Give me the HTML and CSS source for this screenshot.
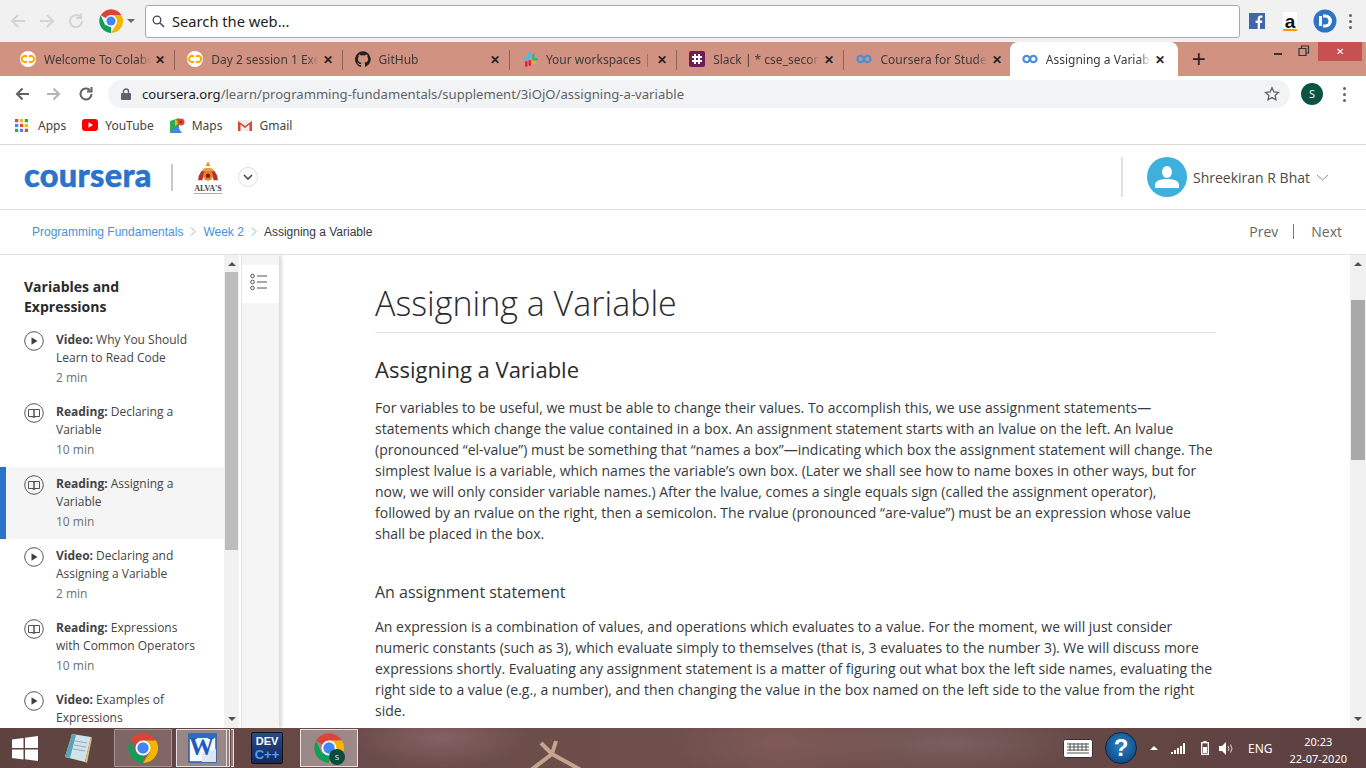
FILE: index.html
```html
<!DOCTYPE html>
<html lang="en">

<head>
  <meta charset="UTF-8">
  <title>Assigning a Variable</title>
  <link rel="stylesheet" href="styles.css">
</head>

<body>
  <!-- Search toolbar -->
  <div class="searchbar">
    <div class="nav-group faded">
      <svg width="18" height="18" viewBox="0 0 18 18"><path d="M16 9H3M9 3L3 9l6 6" fill="none" stroke="#d4d4d4" stroke-width="2"/></svg>
      <svg width="18" height="18" viewBox="0 0 18 18"><path d="M2 9h13M9 3l6 6-6 6" fill="none" stroke="#d4d4d4" stroke-width="2"/></svg>
      <svg width="18" height="18" viewBox="0 0 18 18"><path d="M15 9a6 6 0 1 1-2-4.400M14 1.500V6H9.500" fill="none" stroke="#d4d4d4" stroke-width="2"/></svg>
    </div>
    <svg class="chrome-big" width="24" height="24" viewBox="3 3 42 42"><use href="#chrome"/></svg>
    <span class="caret"></span>
    <div class="search-box">
      <svg width="13" height="13" viewBox="0 0 13 13"><circle cx="5" cy="5" r="3.800" fill="none" stroke="#444" stroke-width="1.300"/><path d="M8 8l4 4" stroke="#444" stroke-width="1.500"/></svg>
      <span>Search the web...</span>
    </div>
    <svg class="ext" width="16" height="16" viewBox="0 0 16 16"><rect width="16" height="16" fill="#4267a8"/><path d="M11 16v-6h2l.3-2.500H11V6c0-.8.300-1.200 1.200-1.200h1.200V2.600c-.5-.1-1.100-.1-1.700-.1C10 2.500 8.700 3.600 8.700 5.600v1.900H6.600V10h2.100v6z" fill="#fff"/></svg>
    <span class="ext amazon">a</span>
    <svg class="ext" width="24" height="24" viewBox="0 0 24 24"><circle cx="12" cy="12" r="11.500" fill="#2f73c4"/><path d="M10 5.500h2.500a6.500 6.500 0 0 1 0 13H10V15.500h2a3.500 3.500 0 0 0 0-7h-2z" fill="#fff"/><rect x="6" y="7" width="3" height="10" fill="#fff"/></svg>
    <div class="dots"><i></i><i></i><i></i></div>
  </div>

  <!-- Tab strip -->
  <div class="tabstrip">
    <div class="tab">
      <svg class="fav" width="16" height="16" viewBox="0 0 16 16"><use href="#colab"/></svg>
      <span class="tab-title">Welcome To Colaboratory</span><span class="tab-x">✕</span>
    </div>
    <div class="tab">
      <svg class="fav" width="16" height="16" viewBox="0 0 16 16"><use href="#colab"/></svg>
      <span class="tab-title">Day 2 session 1 Exercise</span><span class="tab-x">✕</span>
    </div>
    <div class="tab">
      <svg class="fav" width="16" height="16" viewBox="0 0 16 16"><path d="M8 .3a8 8 0 0 0-2.500 15.600c.4.100.5-.2.500-.4v-1.400c-2.200.5-2.700-1-2.700-1-.4-.9-.9-1.200-.9-1.200-.7-.5.100-.5.100-.5.800.1 1.200.8 1.200.8.700 1.200 1.900.9 2.300.7.100-.5.300-.9.500-1.100-1.800-.2-3.600-.9-3.600-4 0-.9.300-1.600.8-2.100-.1-.2-.4-1 .1-2.100 0 0 .7-.2 2.200.8a7.600 7.600 0 0 1 4 0c1.500-1 2.200-.8 2.200-.8.500 1.100.2 1.900.1 2.100.5.600.8 1.300.8 2.100 0 3.100-1.900 3.700-3.700 3.900.3.300.6.800.6 1.500v2.200c0 .2.100.5.500.4A8 8 0 0 0 8 .3z" fill="#222"/></svg>
      <span class="tab-title">GitHub</span><span class="tab-x">✕</span>
    </div>
    <div class="tab">
      <svg class="fav" width="16" height="16" viewBox="0 0 16 16"><rect x="6" y="1" width="2.500" height="6" rx="1.200" fill="#36c5f0"/><rect x="1" y="6" width="6" height="2.500" rx="1.200" fill="#36c5f0"/><rect x="10" y="3" width="2.500" height="6" rx="1.200" fill="#2eb67d"/><rect x="10" y="7" width="6" height="2.500" rx="1.200" fill="#2eb67d"/><rect x="8" y="10" width="6" height="2.500" rx="1.200" fill="#ecb22e"/><rect x="3" y="10" width="2.500" height="6" rx="1.200" fill="#e01e5a"/><rect x="6.500" y="9" width="2.500" height="6" rx="1.200" fill="#e01e5a"/></svg>
      <span class="tab-title">Your workspaces | Slack</span><span class="tab-x">✕</span>
    </div>
    <div class="tab">
      <svg class="fav" width="16" height="16" viewBox="0 0 16 16"><rect width="16" height="16" rx="2" fill="#6b1d56"/><path d="M6 3v10M10 3v10M3 6h10M3 10h10" stroke="#fff" stroke-width="2"/></svg>
      <span class="tab-title">Slack | * cse_second_year</span><span class="tab-x">✕</span>
    </div>
    <div class="tab">
      <svg class="fav" width="16" height="16" viewBox="0 0 16 16"><use href="#cera"/></svg>
      <span class="tab-title">Coursera for Students</span><span class="tab-x">✕</span>
    </div>
    <div class="tab active">
      <svg class="fav" width="16" height="16" viewBox="0 0 16 16"><use href="#cera"/></svg>
      <span class="tab-title">Assigning a Variable</span><span class="tab-x">✕</span>
    </div>
    <span class="new-tab">+</span>
    <div class="win-controls">
      <span class="win-min"></span>
      <svg width="12" height="12" viewBox="0 0 12 12"><path d="M3.500 3V1h7v7H8M1 3.500h7v7H1z" fill="none" stroke="#333" stroke-width="1.200"/></svg>
      <span class="win-close">✕</span>
    </div>
  </div>

  <!-- Address bar -->
  <div class="addressbar">
    <svg width="16" height="16" viewBox="0 0 16 16"><path d="M15 8H3M8.500 2.500L3 8l5.500 5.500" fill="none" stroke="#5f6368" stroke-width="2"/></svg>
    <svg width="16" height="16" viewBox="0 0 16 16"><path d="M1 8h12M7.500 2.500L13 8l-5.500 5.500" fill="none" stroke="#b5b5b5" stroke-width="2"/></svg>
    <svg width="16" height="16" viewBox="0 0 16 16"><path d="M13.500 8a5.500 5.500 0 1 1-1.700-4M13.500 1v4.500H9" fill="none" stroke="#5f6368" stroke-width="2"/></svg>
    <div class="omnibox">
      <svg width="10" height="12" viewBox="0 0 10 12"><rect y="5" width="10" height="7" rx="1" fill="#5f6368"/><path d="M2.500 5V3.500a2.500 2.500 0 0 1 5 0V5" fill="none" stroke="#5f6368" stroke-width="1.400"/></svg>
      <span class="url"><b>coursera.org</b>/learn/programming-fundamentals/supplement/3iOjO/assigning-a-variable</span>
      <svg class="star" width="16" height="16" viewBox="0 0 16 16"><path d="M8 1.800l1.900 4.100 4.500.5-3.300 3 .9 4.400L8 11.600l-4 2.200.9-4.400-3.300-3 4.500-.5z" fill="none" stroke="#5f6368" stroke-width="1.300"/></svg>
    </div>
    <span class="profile">S</span>
    <div class="dots"><i></i><i></i><i></i></div>
  </div>

  <!-- Bookmarks -->
  <div class="bookmarks">
    <span class="bm apps">
      <svg width="13" height="13" viewBox="0 0 12 12"><g><rect width="3" height="3" fill="#ea4335"/><rect x="4.500" width="3" height="3" fill="#fbbc05"/><rect x="9" width="3" height="3" fill="#34a853"/><rect y="4.500" width="3" height="3" fill="#4285f4"/><rect x="4.500" y="4.500" width="3" height="3" fill="#ea4335"/><rect x="9" y="4.500" width="3" height="3" fill="#fbbc05"/><rect y="9" width="3" height="3" fill="#34a853"/><rect x="4.500" y="9" width="3" height="3" fill="#4285f4"/><rect x="9" y="9" width="3" height="3" fill="#ea4335"/></g></svg>
      Apps
    </span>
    <span class="bm">
      <svg width="16" height="12" viewBox="0 0 16 12"><rect width="16" height="12" rx="3" fill="#f00"/><path d="M6.500 3.300v5.400L11 6z" fill="#fff"/></svg>
      YouTube
    </span>
    <span class="bm">
      <svg width="15" height="15" viewBox="0 0 15 15"><path d="M0 3l9-3v15H0z" fill="#34a853"/><path d="M0 15l7-7 5 7z" fill="#4285f4"/><path d="M5 1l4 4-4 3z" fill="#fbbc05"/><circle cx="11" cy="4" r="3.500" fill="#ea4335"/><circle cx="11" cy="4" r="1.200" fill="#a01c12"/></svg>
      Maps
    </span>
    <span class="bm">
      <svg width="14" height="11" viewBox="0 0 14 11"><rect width="14" height="11" fill="#eee"/><path d="M0 11V1l7 5 7-5v10h-2.500V4.500L7 8 2.500 4.500V11z" fill="#d14836"/></svg>
      Gmail
    </span>
  </div>

  <!-- Coursera header -->
  <header class="site-header">
    <span class="logo">coursera</span>
    <span class="logo-sep"></span>
    <div class="partner">
      <svg width="24" height="23" viewBox="0 0 22 20"><path d="M11 0l2 4h-4z" fill="#e8832a"/><path d="M2 17a9 11 0 0 1 18 0h-4a5 6 0 0 0-10 0z" fill="#b5312c"/><path d="M7 6h8l1 3H6z" fill="#e8a33a"/><circle cx="11" cy="13" r="4.500" fill="#e8832a"/><circle cx="11" cy="13" r="2" fill="#7c1f1a"/></svg>
      <span class="partner-name">ALVA'S</span>
    </div>
    <span class="round-caret">
      <svg width="10" height="6" viewBox="0 0 10 6"><path d="M1 1l4 4 4-4" fill="none" stroke="#3c4a55" stroke-width="1.600"/></svg>
    </span>
    <span class="header-sep"></span>
    <svg class="avatar" width="40" height="40" viewBox="0 0 40 40"><circle cx="20" cy="20" r="20" fill="#3eb0dc"/><ellipse cx="20" cy="15" rx="5" ry="6" fill="#fff"/><path d="M8 31v-3c0-4 5-6 12-6s12 2 12 6v3z" fill="#fff"/></svg>
    <span class="user-name">Shreekiran R Bhat</span>
    <svg width="13" height="7" viewBox="0 0 13 7"><path d="M1 1l5.500 5 5.500-5" fill="none" stroke="#8a8f94" stroke-width="1"/></svg>
  </header>

  <!-- Breadcrumb -->
  <div class="breadcrumb-row">
    <a class="crumb">Programming Fundamentals</a>
    <svg width="6" height="9" viewBox="0 0 6 9"><path d="M1 .5l4 4-4 4" fill="none" stroke="#aaa"/></svg>
    <a class="crumb">Week 2</a>
    <svg width="6" height="9" viewBox="0 0 6 9"><path d="M1 .5l4 4-4 4" fill="none" stroke="#aaa"/></svg>
    <span class="crumb-current">Assigning a Variable</span>
    <div class="pager">
      <span>Prev</span><i></i><span>Next</span>
    </div>
  </div>

  <!-- Main area -->
  <div class="main">
    <aside class="sidebar">
      <h4 class="lesson-title">Variables and Expressions</h4>
      <div class="item">
        <svg class="item-icon" width="20" height="20" viewBox="0 0 20 20"><use href="#ico-video"/></svg>
        <div><div><b>Video:</b> Why You Should Learn to Read Code</div><div class="dur">2 min</div></div>
      </div>
      <div class="item">
        <svg class="item-icon" width="20" height="20" viewBox="0 0 20 20"><use href="#ico-read"/></svg>
        <div><div><b>Reading:</b> Declaring a Variable</div><div class="dur">10 min</div></div>
      </div>
      <div class="item current">
        <svg class="item-icon" width="20" height="20" viewBox="0 0 20 20"><use href="#ico-read"/></svg>
        <div><div><b>Reading:</b> Assigning a Variable</div><div class="dur">10 min</div></div>
      </div>
      <div class="item">
        <svg class="item-icon" width="20" height="20" viewBox="0 0 20 20"><use href="#ico-video"/></svg>
        <div><div><b>Video:</b> Declaring and Assigning a Variable</div><div class="dur">2 min</div></div>
      </div>
      <div class="item">
        <svg class="item-icon" width="20" height="20" viewBox="0 0 20 20"><use href="#ico-read"/></svg>
        <div><div><b>Reading:</b> Expressions with Common Operators</div><div class="dur">10 min</div></div>
      </div>
      <div class="item">
        <svg class="item-icon" width="20" height="20" viewBox="0 0 20 20"><use href="#ico-video"/></svg>
        <div><div><b>Video:</b> Examples of Expressions</div></div>
      </div>
    </aside>

    <div class="scrollbar side-scroll">
      <span class="arrow-up"></span>
      <span class="thumb"></span>
      <span class="arrow-down"></span>
    </div>

    <div class="rail">
      <div class="rail-btn">
        <svg width="18" height="18" viewBox="0 0 18 18"><g fill="none" stroke="#555" stroke-width="1"><circle cx="2.500" cy="3" r="1.800"/><circle cx="2.500" cy="9" r="1.800"/><circle cx="2.500" cy="15" r="1.800"/><path d="M7 3h10M7 9h10M7 15h10"/></g></svg>
      </div>
    </div>

    <main class="content">
      <article class="article">
        <h1>Assigning a Variable</h1>
        <h2>Assigning a Variable</h2>
        <p>For variables to be useful, we must be able to change their values. To accomplish this, we use assignment statements—statements which change the value contained in a box. An assignment statement starts with an lvalue on the left. An lvalue (pronounced “el-value”) must be something that “names a box”—indicating which box the assignment statement will change. The simplest lvalue is a variable, which names the variable’s own box. (Later we shall see how to name boxes in other ways, but for now, we will only consider variable names.) After the lvalue, comes a single equals sign (called the assignment operator), followed by an rvalue on the right, then a semicolon. The rvalue (pronounced “are-value”) must be an expression whose value shall be placed in the box.</p>
        <h3>An assignment statement</h3>
        <p>An expression is a combination of values, and operations which evaluates to a value. For the moment, we will just consider numeric constants (such as 3), which evaluate simply to themselves (that is, 3 evaluates to the number 3). We will discuss more expressions shortly. Evaluating any assignment statement is a matter of figuring out what box the left side names, evaluating the right side to a value (e.g., a number), and then changing the value in the box named on the left side to the value from the right side.</p>
      </article>
    </main>

    <div class="scrollbar page-scroll">
      <span class="arrow-up"></span>
      <span class="thumb"></span>
      <span class="arrow-down"></span>
    </div>
  </div>

  <!-- Windows taskbar -->
  <footer class="taskbar">
    <svg class="figure" width="70" height="40" viewBox="0 0 70 40"><path d="M6 42L27 26M27 26L16 15M27 26L31 13M27 26L56 42" fill="none" stroke="#c4a68f" stroke-width="4"/></svg>
    <svg class="win-logo" width="26" height="25" viewBox="0 0 26 25"><path d="M0 3.500L11.500 2v10H0zM13 1.800L26 0v12H13zM0 13.500h11.500v10L0 22zM13 13.500h13V25l-13-1.800z" fill="#fff"/></svg>
    <svg class="task-note" width="30" height="32" viewBox="0 0 30 32"><path d="M9 2l19 3-6 25-20-5z" fill="#cfe4ea"/><path d="M9 2L2 25l5 1 6-23z" fill="#5ba3b5"/><path d="M22 30l6-25 1 1-5 25z" fill="#e0c070"/><path d="M12 9l12 2M11 13l12 2M10 17l12 2" stroke="#9ab" stroke-width="1"/></svg>
    <div class="task-btn chrome-task"><svg width="30" height="30" viewBox="3 3 42 42"><use href="#chrome"/></svg></div>
    <div class="task-btn word-task">
      <svg width="30" height="30" viewBox="0 0 30 30"><rect x="2" y="1" width="27" height="28" fill="#f6f9fd" stroke="#2a5cab" stroke-width="1.500"/><path d="M2 1h27v4H2z" fill="#2a6cc8"/><path d="M15 20l14-4v13H15z" fill="#dce6f2"/></svg>
      <span class="word-letter">W</span>
    </div>
    <span class="stack-edge"></span>
    <span class="stack-edge second"></span>
    <div class="dev-icon"><span>DEV</span><span class="cpp">C++</span></div>
    <div class="task-btn chrome-user">
      <svg width="30" height="30" viewBox="3 3 42 42"><use href="#chrome"/></svg>
      <span class="user-badge">S</span>
    </div>
    <div class="tray">
      <svg class="tray-kbd" width="30" height="19" viewBox="0 0 30 19"><rect x=".5" y=".5" width="29" height="18" rx="2" fill="#fff" stroke="#333"/><path d="M4 5h22M4 8h22M4 11h22M4 14h22M7 4v8M11 4v8M15 4v8M19 4v8M23 4v8" stroke="#555" stroke-width="1" fill="none"/></svg>
      <span class="help">?</span>
      <span class="tray-caret"></span>
      <svg class="tray-signal" width="14" height="11" viewBox="0 0 14 11"><path d="M0 9h2v2H0zM3 7h2v4H3zM6 5h2v6H6zM9 3h2v8H9zM12 0h2v11h-2z" fill="#fff"/></svg>
      <svg class="tray-battery" width="8" height="14" viewBox="0 0 8 14"><rect x=".7" y="1.700" width="6.600" height="11.600" fill="none" stroke="#fff" stroke-width="1.300"/><rect x="2.500" y="0" width="3" height="2" fill="#fff"/><rect x="2" y="6" width="4" height="6" fill="#fff"/></svg>
      <svg class="tray-vol" width="15" height="13" viewBox="0 0 15 13"><path d="M0 4h3l4-4v13L3 9H0z" fill="#fff"/><path d="M9 4q2 2.500 0 5M11.500 2.500q3 4 0 8" fill="none" stroke="#ddd"/></svg>
      <span class="lang">ENG</span>
      <div class="clock"><span>20:23</span><span>22-07-2020</span></div>
    </div>
  </footer>

  <!-- Shared icons -->
  <svg class="defs" width="0" height="0">
    <defs>
      <g id="chrome">
        <path d="M24 24L6 14A21 21 0 0 1 42.200 13.500H24z" fill="#db4437"/>
        <path d="M24 24l-10 8L6 14a21 21 0 0 0 8 28 21 21 0 0 0 10 3z" fill="#0f9d58"/>
        <path d="M24 13.500h18.200A21 21 0 0 1 24 45l10-16z" fill="#f4b400"/>
        <circle cx="24" cy="24" r="10.500" fill="#fff"/>
        <circle cx="24" cy="24" r="8" fill="#4285f4"/>
      </g>
      <g id="colab">
        <circle cx="8" cy="8" r="8" fill="#fff"/>
        <path d="M7 5.800a3 3 0 1 0 0 4.400M9 5.800a3 3 0 1 1 0 4.400" fill="none" stroke="#f9ab00" stroke-width="2"/>
      </g>
      <g id="cera">
        <circle cx="4.600" cy="8" r="3.200" fill="none" stroke="#4b8fd6" stroke-width="2.200"/>
        <circle cx="11.400" cy="8" r="3.200" fill="none" stroke="#4b8fd6" stroke-width="2.200"/>
      </g>
      <g id="ico-video">
        <circle cx="10" cy="10" r="9.300" fill="none" stroke="#555" stroke-width="1"/>
        <path d="M7.500 6.300v7.400L13.500 10z" fill="#3c4043"/>
      </g>
      <g id="ico-read">
        <circle cx="10" cy="10" r="9.300" fill="none" stroke="#555" stroke-width="1"/>
        <path d="M4.500 6.500h5.500v7H4.500zM10 6.500h5.500v7H10zM4.500 13.500H8l2 1 2-1h3.500" fill="none" stroke="#555" stroke-width="1"/>
      </g>
    </defs>
  </svg>
</body>

</html>
```

FILE: styles.css
```css
* {
  box-sizing: border-box;
}

html,
body {
  height: 768px;
}

body {
  margin: 0;
  overflow: hidden;
  display: flex;
  flex-direction: column;
  font-family: "Open Sans", "Noto Sans", sans-serif;
  color: #373a3c;
  background: #fff;
}

svg {
  flex: none;
}

/* search toolbar */
.searchbar {
  height: 42px;
  background: #f1f1f1;
  display: flex;
  align-items: center;
  padding: 0 0 0 9px;
}

.nav-group {
  display: flex;
  gap: 11px;
  width: 90px;
}

.chrome-big {
  margin-right: 4px;
}

.caret {
  border: 4px solid transparent;
  border-top: 4px solid #666;
  border-bottom: 0;
  margin-right: 10px;
}

.search-box {
  width: 1095px;
  height: 33px;
  background: #fff;
  border: 1px solid #a9a9a9;
  border-radius: 3px;
  display: flex;
  align-items: center;
  gap: 7px;
  padding-left: 6px;
  font-family: "Noto Sans", sans-serif;
  font-size: 14.700px;
  color: #222;
  margin-right: 9px;
}

.ext {
  margin-right: 12px;
}

.amazon {
  width: 14px;
  margin-left: 6px;
  font-family: "Liberation Sans", sans-serif;
  font-weight: bold;
  font-size: 19px;
  line-height: 1;
  text-align: center;
  color: #111;
  background: #fff;
  box-shadow: inset 0 -2px 0 #f90;
  margin-right: 16px;
}

.dots {
  display: flex;
  flex-direction: column;
  gap: 3px;
}

.dots i {
  width: 3px;
  height: 3px;
  border-radius: 50%;
  background: #5f6368;
}

/* tabs */
.tabstrip {
  height: 34px;
  background: #d19282;
  display: flex;
  position: relative;
  padding-left: 8px;
}

.tab {
  width: 167.300px;
  height: 34px;
  display: flex;
  align-items: center;
  padding: 0 8px 0 12px;
  position: relative;
  font-size: 12px;
  color: #3b3b3b;
  font-family: "Noto Sans", sans-serif;
}

.tab::after {
  content: "";
  position: absolute;
  right: 0;
  top: 8px;
  height: 20px;
  width: 1px;
  background: #8d6458;
}

.tab.active {
  background: #fff;
  border-radius: 8px 8px 0 0;
  width: 168px;
  margin-left: -2px;
  padding: 0 11px 0 12px;
}

.tab.active::after,
.tab:nth-child(6)::after {
  display: none;
}

.fav {
  margin-right: 8px;
}

.tab-title {
  flex: 1;
  overflow: hidden;
  white-space: nowrap;
  -webkit-mask-image: linear-gradient(to right, #000 90%, transparent);
  mask-image: linear-gradient(to right, #000 90%, transparent);
}

.tab-x {
  font-size: 12px;
  font-weight: bold;
  width: 12px;
  margin-left: 5px;
  color: #222;
}

.new-tab {
  font-family: "Liberation Sans", sans-serif;
  font-size: 24px;
  line-height: 34px;
  width: 42px;
  text-align: center;
  color: #222;
}

.win-controls {
  position: absolute;
  right: 0;
  top: 0;
  display: flex;
  align-items: flex-start;
}

.win-controls svg {
  margin: 3px 8px 0 0;
}

.win-min {
  width: 8px;
  height: 2px;
  background: #333;
  margin: 11px 16px 0 0;
}

.win-close {
  width: 44px;
  height: 19px;
  background: #c75050;
  color: #fff;
  font-size: 10px;
  line-height: 19px;
  text-align: center;
  margin-right: 4px;
}

/* address bar */
.addressbar {
  height: 34px;
  display: flex;
  align-items: center;
  gap: 16px;
  padding: 2px 0 0 14px;
  background: #fff;
}

.omnibox {
  width: 1182px;
  height: 28px;
  margin-left: -2px;
  background: #f1f3f4;
  border-radius: 14px;
  display: flex;
  align-items: center;
  padding: 0 10px 0 13px;
  gap: 11px;
}

.url {
  font-size: 13.100px;
  color: #5f6368;
  font-family: "Noto Sans", sans-serif;
  flex: 1;
  white-space: nowrap;
}

.url b {
  font-weight: normal;
  color: #202124;
}

.profile {
  width: 22px;
  height: 22px;
  margin-left: -5px;
  border-radius: 50%;
  background: #0b5345;
  color: #fff;
  font-size: 11px;
  line-height: 22px;
  text-align: center;
}

.addressbar .dots {
  margin-left: 4px;
}

/* bookmarks */
.bookmarks {
  height: 35px;
  border-bottom: 1px solid #dadada;
  display: flex;
  align-items: center;
  gap: 16px;
  padding: 0 0 4px 15px;
  font-size: 12px;
  color: #444;
  font-family: "Noto Sans", sans-serif;
}

.bm {
  display: flex;
  align-items: center;
  gap: 7px;
}

.bm.apps {
  gap: 10px;
}

/* site header */
.site-header {
  height: 65px;
  border-bottom: 1px solid #e1e1e1;
  display: flex;
  align-items: center;
  padding-left: 24px;
}

.logo {
  font-family: Lato, "Open Sans", sans-serif;
  font-weight: 900;
  font-size: 32.500px;
  line-height: 1;
  letter-spacing: .3px;
  -webkit-text-stroke: .5px #2a73cc;
  color: #2a73cc;
  width: 147px;
  margin-bottom: 3px;
  white-space: nowrap;
}

.logo-sep {
  width: 2px;
  height: 27px;
  background: #c8c8c8;
}

.partner {
  width: 28px;
  margin-left: 21px;
  display: flex;
  flex-direction: column;
  align-items: center;
}

.partner-name {
  font-family: "Liberation Serif", serif;
  font-size: 8px;
  font-weight: bold;
  line-height: 9px;
  color: #444;
  border-bottom: 1px solid #d98;
  white-space: nowrap;
}

.round-caret {
  width: 20px;
  height: 20px;
  margin-left: 16px;
  border: 1px solid #e1e1e1;
  border-radius: 50%;
  display: flex;
  align-items: center;
  justify-content: center;
}

.header-sep {
  width: 2px;
  height: 40px;
  margin-left: 863px;
  background: #e1e1e1;
}

.avatar {
  margin-left: 24px;
}

.user-name {
  font-size: 14px;
  margin: 0 6px 0 6px;
  color: #4a4a4a;
}

/* breadcrumb */
.breadcrumb-row {
  height: 45px;
  border-bottom: 1px solid #e1e1e1;
  display: flex;
  align-items: center;
  gap: 7px;
  padding: 0 24px 1px 32px;
  font-family: "Liberation Sans", sans-serif;
  font-size: 12px;
}

.crumb {
  color: #4a90d9;
}

.crumb-current {
  color: #373a3c;
}

.pager {
  margin-left: auto;
  display: flex;
  align-items: center;
  font-family: "Open Sans", sans-serif;
  font-size: 14px;
  color: #666;
}

.pager i {
  width: 1px;
  height: 15px;
  margin: 0 17px 0 15px;
  background: #777;
}

/* main area */
.main {
  height: 473px;
  display: flex;
  overflow: hidden;
}

.sidebar {
  width: 224px;
  overflow: hidden;
  padding-top: 22px;
  font-size: 12px;
  line-height: 18px;
  flex: none;
}

.lesson-title {
  margin: 0 80px 5px 24px;
  font-size: 14px;
  font-weight: 700;
  line-height: 20px;
  height: 41px;
  color: #2a2a2a;
}

.item {
  height: 72px;
  padding: 8px 24px 0 24px;
  display: flex;
  gap: 12px;
  color: #444;
}

.item b {
  font-weight: 700;
}

.item.current {
  background: #f5f5f5;
  box-shadow: inset 6px 0 0 #2a73cc;
}

.dur {
  color: #6f6f6f;
  margin-top: 2px;
}

.scrollbar {
  flex: none;
  background: #f1f1f1;
  display: flex;
  flex-direction: column;
  align-items: center;
}

.arrow-up,
.arrow-down {
  border: 4px solid transparent;
  height: 0;
}

.arrow-up {
  border-bottom: 4px solid #505050;
  border-top: 0;
}

.arrow-down {
  border-top: 4px solid #505050;
  border-bottom: 0;
  margin-top: auto;
  margin-bottom: 7px;
}

.side-scroll {
  width: 15px;
  padding-top: 7px;
}

.side-scroll .thumb {
  width: 13px;
  height: 278px;
  margin-top: 6px;
  background: #bdbdbd;
}

.rail {
  width: 38px;
  margin-left: 2px;
  border-left: 1px solid #e4e4e4;
  flex: none;
  background: #f5f5f5;
  padding-top: 10px;
  box-shadow: 3px 0 3px #ddd;
}

.rail-btn {
  height: 38px;
  background: #fff;
  padding: 8px 0 0 8px;
}

.content {
  flex: 1;
  padding: 32px 134px 0 96px;
  overflow: hidden;
}

.article h1 {
  margin: 0;
  height: 46px;
  font-size: 34px;
  font-weight: 300;
  line-height: 32px;
  color: #2a2d2f;
  border-bottom: 1px solid #e1e1e1;
}

.article h2 {
  margin: 22px 0 14px;
  font-size: 22px;
  font-weight: 400;
  line-height: 28px;
  color: #2a2d2f;
}

.article h3 {
  margin: 36px 0 12px;
  font-size: 16px;
  font-weight: 400;
  line-height: 24px;
}

.article p {
  margin: 0;
  max-width: 839px;
  font-size: 14px;
  line-height: 21px;
}

.page-scroll {
  width: 16px;
  padding-top: 7px;
}

.page-scroll .thumb {
  width: 14px;
  height: 160px;
  margin-top: 34px;
  background: #a8a8a8;
}

/* taskbar */
.taskbar {
  height: 40px;
  display: flex;
  align-items: center;
  position: relative;
  overflow: hidden;
  background:
    radial-gradient(ellipse 90px 30px at 440px 10px, rgba(150, 110, 115, .6), transparent),
    radial-gradient(ellipse 120px 40px at 780px 15px, rgba(135, 95, 90, .7), transparent),
    radial-gradient(ellipse 140px 35px at 950px 15px, rgba(125, 100, 100, .8), transparent),
    linear-gradient(to right, #5d4240, #6a4c4a 30%, #6e4f4b 60%, #5c3f3f);
  padding-left: 12px;
}

.figure {
  position: absolute;
  left: 525px;
  top: 0;
  filter: blur(.6px);
}

.win-logo {
  margin-right: 25px;
}

.task-note {
  margin-right: 21px;
}

.task-btn {
  position: relative;
  width: 58px;
  height: 38px;
  display: flex;
  align-items: center;
  justify-content: center;
  background: rgba(255, 255, 255, .18);
  border: 1px solid rgba(255, 255, 255, .3);
}

.word-task {
  width: 51px;
  margin-left: 4px;
  background: rgba(255, 255, 255, .35);
  border-color: #e8e0e0;
}

.word-letter {
  position: absolute;
  left: 12px;
  top: 2px;
  font-family: "Liberation Serif", serif;
  font-weight: bold;
  font-size: 25px;
  line-height: 30px;
  color: #1c5bbd;
}

.stack-edge {
  width: 3px;
  height: 38px;
  border: 1px solid #e8e0e0;
  border-left: 0;
  background: rgba(255, 255, 255, .3);
}

.stack-edge.second {
  margin-left: 1px;
}

.dev-icon {
  width: 32px;
  height: 32px;
  margin: 0 17px;
  background: linear-gradient(#284a8c, #15285c);
  border: 1px solid #111;
  border-radius: 2px;
  display: flex;
  flex-direction: column;
  align-items: center;
  font-family: "Liberation Sans", sans-serif;
  font-weight: bold;
  font-size: 11px;
  line-height: 13px;
  color: #fff;
  padding-top: 2px;
}

.dev-icon .cpp {
  color: #4aa3ff;
  font-size: 13px;
}

.chrome-user {
  background: rgba(255, 255, 255, .35);
  border-color: #e8e0e0;
}

.user-badge {
  position: absolute;
  right: 12px;
  bottom: 1px;
  width: 16px;
  height: 16px;
  border-radius: 50%;
  background: #0b4a3e;
  color: #fff;
  font-size: 8px;
  line-height: 16px;
  text-align: center;
}

.tray {
  margin-left: auto;
  display: flex;
  align-items: center;
  color: #fff;
  font-size: 12px;
  font-family: "Noto Sans", sans-serif;
}

.help {
  width: 32px;
  height: 32px;
  margin: 0 13px 0 12px;
  border-radius: 50%;
  background: radial-gradient(circle at 50% 40%, #2a83c8, #0a3a72);
  border: 1px solid #06264c;
  color: #fff;
  font-family: "Liberation Sans", sans-serif;
  font-weight: bold;
  font-size: 24px;
  line-height: 30px;
  text-align: center;
}

.tray-caret {
  border: 4px solid transparent;
  border-bottom: 4px solid #fff;
  border-top: 0;
  margin-right: 13px;
}

.tray-signal {
  margin-right: 16px;
}

.tray-battery {
  margin-right: 10px;
}

.tray-vol {
  margin-right: 14px;
}

.clock {
  display: flex;
  flex-direction: column;
  align-items: center;
  line-height: 17px;
  font-size: 11px;
  margin: 3px 19px 0 17px;
}

.defs {
  position: absolute;
}
```
